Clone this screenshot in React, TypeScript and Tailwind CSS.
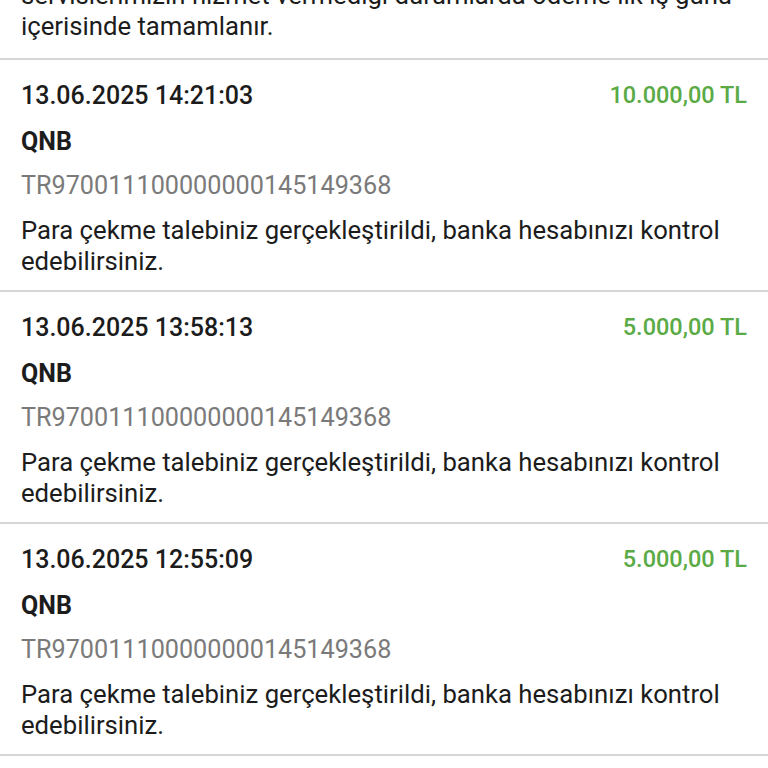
const transactions = [
  { date: '13.06.2025 14:21:03', amount: '10.000,00 TL' },
  { date: '13.06.2025 13:58:13', amount: '5.000,00 TL' },
  { date: '13.06.2025 12:55:09', amount: '5.000,00 TL' },
];

const App = () => {
  return (
    <div className="w-[768px] h-[768px] overflow-hidden bg-white text-[#1c1c1c] font-['Roboto',sans-serif]">
      {/* Info note (scrolled) */}
      <div className="px-[21px] pb-[16px] -mt-[20px] border-b-2 border-[#d6d6d6] text-[25.7px] leading-[31px]">
        servislerimizin hizmet vermediği durumlarda ödeme ilk iş günü içerisinde tamamlanır.
      </div>

      {transactions.map((t, i) => (
        <div key={i} className="px-[21px] pt-[20px] pb-[13px] border-b-2 border-[#d6d6d6]">
          <div className="flex items-center justify-between">
            <span className="text-[25px] leading-[31px] font-medium">{t.date}</span>
            <span className="text-[23.5px] leading-[31px] font-medium text-[#5aaa46]">{t.amount}</span>
          </div>
          <div className="mt-[15px] text-[25px] leading-[31px] font-bold">QNB</div>
          <div className="mt-[13px] text-[25.2px] leading-[31px] text-[#7a7a7a]">TR970011100000000145149368</div>
          <p className="mt-[14px] text-[25.7px] leading-[31px]">
            Para çekme talebiniz gerçekleştirildi, banka hesabınızı kontrol edebilirsiniz.
          </p>
        </div>
      ))}
    </div>
  );
};

export default App;
